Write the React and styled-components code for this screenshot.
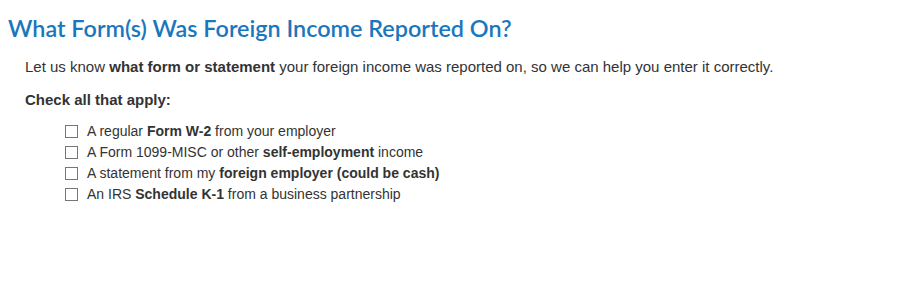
import styled, { createGlobalStyle } from 'styled-components';

const GlobalStyle = createGlobalStyle`
	body {
		margin: 0;
		background: #fff;
		font-family: 'Liberation Sans', Arial, sans-serif;
		color: #333;
	}
`;

const Page = styled.div`
	padding: 14px 8px 0 8px;
`;

const Title = styled.h1`
	margin: 0;
	font-family: Lato, 'Noto Sans', sans-serif;
	font-weight: 600;
	font-size: 23.4px;
	line-height: 28px;
	color: #1b77bd;
`;

const Body = styled.div`
	padding-left: 17px;
	font-size: 15px;
	line-height: 17px;
`;

const Intro = styled.p`
	margin: 16px 0 0 0;
`;

const Label = styled.p`
	margin: 16px 0 0 0;
	font-weight: bold;
`;

const Options = styled.ul`
	list-style: none;
	margin: 15px 0 0 0;
	padding: 0 0 0 40px;
	display: flex;
	flex-direction: column;
	gap: 5px;
	font-size: 14px;
	line-height: 16px;
`;

const Option = styled.li`
	display: flex;
	align-items: center;
	gap: 9px;
`;

const Box = styled.span`
	width: 11px;
	height: 11px;
	border: 1px solid #767676;
	background: #fff;
	flex-shrink: 0;
`;

const options = [
	['A regular ', 'Form W-2', ' from your employer'],
	['A Form 1099-MISC or other ', 'self-employment', ' income'],
	['A statement from my ', 'foreign employer (could be cash)', ''],
	['An IRS ', 'Schedule K-1', ' from a business partnership'],
];

const App = () => {
	return (
		<>
			<GlobalStyle />
			<Page>
				<Title>What Form(s) Was Foreign Income Reported On?</Title>
				<Body>
					<Intro>
						Let us know <b>what form or statement</b> your foreign income was
						reported on, so we can help you enter it correctly.
					</Intro>
					<Label>Check all that apply:</Label>
					<Options>
						{options.map(([a, b, c]) => (
							<Option key={b}>
								<Box />
								<span>
									{a}
									<b>{b}</b>
									{c}
								</span>
							</Option>
						))}
					</Options>
				</Body>
			</Page>
		</>
	);
};

export default App;
